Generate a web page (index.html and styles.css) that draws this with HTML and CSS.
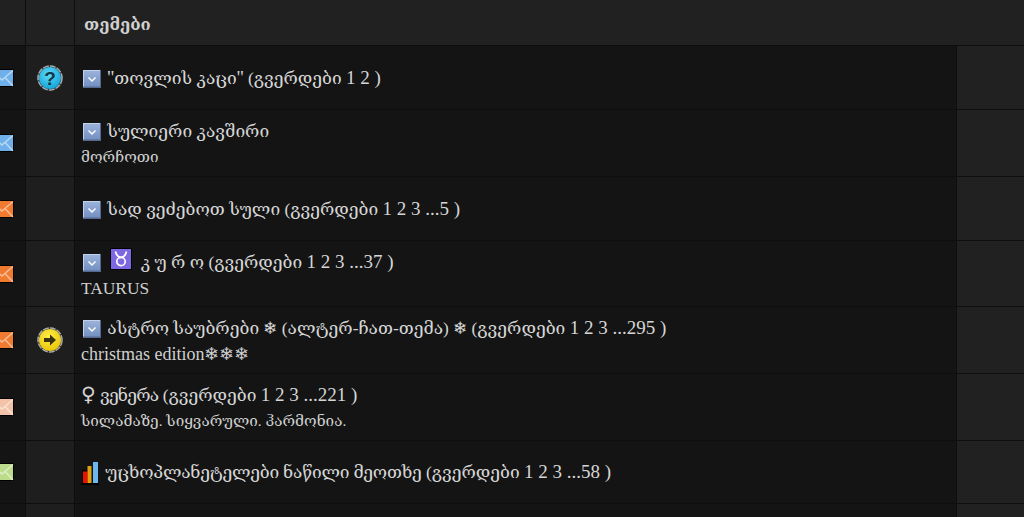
FILE: index.html
```html
<!DOCTYPE html>
<html lang="ka">
<head>
  <meta charset="UTF-8" />
  <title>თემები</title>
  <link rel="stylesheet" href="styles.css">
</head>
<body>
  <svg class="defs" width="0" height="0">
    <defs>
      <linearGradient id="fold-bg" x1="0" y1="0" x2="0" y2="1">
        <stop offset="0" stop-color="#9db4dc"/>
        <stop offset="1" stop-color="#6f8dc0"/>
      </linearGradient>
      <radialGradient id="blue-bg" cx="0.45" cy="0.35" r="0.7">
        <stop offset="0" stop-color="#5fdcfa"/>
        <stop offset="1" stop-color="#0f9fd6"/>
      </radialGradient>
      <radialGradient id="yellow-bg" cx="0.45" cy="0.35" r="0.7">
        <stop offset="0" stop-color="#fff04a"/>
        <stop offset="1" stop-color="#e8c206"/>
      </radialGradient>
    </defs>
    <symbol id="env" viewBox="0 0 24 18">
      <rect x="0.5" y="0.5" width="23" height="17" fill="currentColor" stroke="#000"/>
      <path d="M1 1.5 L12 11 L23 1.5 M1 17 L9 8.5 M23 17 L15 8.5" fill="none" stroke="#fff" stroke-opacity="0.5" stroke-width="1.5"/>
    </symbol>
    <symbol id="fold" viewBox="0 0 18 18">
      <rect width="18" height="18" fill="url(#fold-bg)"/>
      <path d="M0 0H18V1H1V18H0Z" fill="#c2d1ea"/>
      <path d="M0 16.5H18V18H0ZM17 0H18V18H17Z" fill="#56688e"/>
      <path d="M5.5 7.5 L9 11 L12.5 7.5" fill="none" stroke="#fff" stroke-width="1.5"/>
    </symbol>
  </svg>

  <div class="topics">
    <div class="row head">
      <div class="cell c-env"></div>
      <div class="cell c-state"></div>
      <div class="cell c-title"><b>თემები</b></div>
    </div>

    <div class="row r1">
      <div class="cell c-env"><svg class="env blue"><use href="#env"/></svg></div>
      <div class="cell c-state">
        <svg class="state" viewBox="0 0 26 26"><circle cx="13" cy="13" r="12" fill="none" stroke="#a5a9a9" stroke-width="1.6" stroke-dasharray="6 1"/><circle cx="13" cy="13" r="11" fill="url(#blue-bg)"/><text x="13" y="19.5" text-anchor="middle" class="mark">?</text></svg>
      </div>
      <div class="cell c-title">
        <p class="t"><svg class="fold"><use href="#fold"/></svg> <span class="n">''</span>თოვლის კაცი<span class="n">''</span> (გვერდები <span class="n">1 2 )</span></p>
      </div>
      <div class="cell c-last"></div>
    </div>

    <div class="row r2">
      <div class="cell c-env"><svg class="env blue"><use href="#env"/></svg></div>
      <div class="cell c-state"></div>
      <div class="cell c-title">
        <p class="t"><svg class="fold"><use href="#fold"/></svg> სულიერი კავშირი</p>
        <p class="d">მორჩოთი</p>
      </div>
      <div class="cell c-last"></div>
    </div>

    <div class="row r3">
      <div class="cell c-env"><svg class="env orange"><use href="#env"/></svg></div>
      <div class="cell c-state"></div>
      <div class="cell c-title">
        <p class="t"><svg class="fold"><use href="#fold"/></svg> სად ვეძებოთ სული (გვერდები <span class="n">1 2 3 ...5 )</span></p>
      </div>
      <div class="cell c-last"></div>
    </div>

    <div class="row r4">
      <div class="cell c-env"><svg class="env orange"><use href="#env"/></svg></div>
      <div class="cell c-state"></div>
      <div class="cell c-title">
        <p class="t"><svg class="fold"><use href="#fold"/></svg> <svg class="zodiac" viewBox="0 0 22 22"><rect x="0.5" y="0.5" width="21" height="21" fill="#7d68e2" stroke="#000"/><circle cx="11" cy="13.5" r="4.2" fill="none" stroke="#fff" stroke-width="1.7"/><path d="M5.5 3.5 C6.5 8 9 9.3 11 9.3 C13 9.3 15.5 8 16.5 3.5" fill="none" stroke="#fff" stroke-width="1.7"/></svg> კ უ რ ო (გვერდები <span class="n">1 2 3 ...37 )</span></p>
        <p class="d latin">TAURUS</p>
      </div>
      <div class="cell c-last"></div>
    </div>

    <div class="row r5">
      <div class="cell c-env"><svg class="env orange"><use href="#env"/></svg></div>
      <div class="cell c-state">
        <svg class="state" viewBox="0 0 26 26"><circle cx="13" cy="13" r="12" fill="none" stroke="#a5a9a9" stroke-width="1.6" stroke-dasharray="6 1"/><circle cx="13" cy="13" r="11" fill="url(#yellow-bg)"/><path d="M7 11H13V7.5L19 13L13 18.5V15H7Z" fill="#3a3210"/></svg>
      </div>
      <div class="cell c-title">
        <p class="t"><svg class="fold"><use href="#fold"/></svg> ასტრო საუბრები ❄ (ალტერ-ჩათ-თემა) ❄ (გვერდები <span class="n">1 2 3 ...295 )</span></p>
        <p class="d xmas">christmas edition❄❄❄</p>
      </div>
      <div class="cell c-last"></div>
    </div>

    <div class="row r6">
      <div class="cell c-env"><svg class="env peach"><use href="#env"/></svg></div>
      <div class="cell c-state"></div>
      <div class="cell c-title">
        <p class="t flush"><span class="venus">♀</span> <span class="tight">ვენერა</span> (გვერდები <span class="n">1 2 3 ...221 )</span></p>
        <p class="d">სილამაზე. სიყვარული. ჰარმონია.</p>
      </div>
      <div class="cell c-last"></div>
    </div>

    <div class="row r7">
      <div class="cell c-env"><svg class="env green"><use href="#env"/></svg></div>
      <div class="cell c-state"></div>
      <div class="cell c-title">
        <p class="t flush">
          <svg class="chart" viewBox="0 0 18 24"><path d="M1 23V9H6.5V23Z" fill="#000"/><path d="M2 22V10.5H6.5V22Z" fill="#f01000"/><path d="M6.5 22V5H10.5V22Z" fill="#e0a010"/><path d="M12 22V1H17V22Z" fill="#6cb8f0"/><path d="M0 22H18V24H0Z" fill="#000"/></svg>
          <span class="snug">უცხოპლანეტელები ნაწილი მეოთხე</span> (გვერდები <span class="n">1 2 3 ...58 )</span>
        </p>
      </div>
      <div class="cell c-last"></div>
    </div>

    <div class="row r8">
      <div class="cell c-env"></div>
      <div class="cell c-state"></div>
      <div class="cell c-title"></div>
      <div class="cell c-last"></div>
    </div>
  </div>
</body>
</html>
```

FILE: styles.css
```css
* {
  box-sizing: border-box;
}
html, body {
  height: 517px;
  overflow: hidden;
}
body {
  margin: 0;
  background: #141414;
  color: #d6d6d6;
  font-family: 'Liberation Serif', 'DejaVu Serif', serif;
}
.defs {
  display: block;
  height: 0;
}
.topics {
  display: flex;
  flex-direction: column;
}
.row {
  display: flex;
  border-bottom: 1px solid #0e0e0e;
}
.head { height: 46px; }
.r1 { height: 64px; }
.r2 { height: 67px; }
.r3 { height: 64px; }
.r4 { height: 66px; }
.r5 { height: 67px; }
.r6 { height: 67px; }
.r7 { height: 63px; }
.r8 { height: 14px; }

.cell {
  display: flex;
  align-items: center;
  border-right: 1px solid #0e0e0e;
}
.c-env {
  width: 26px;
  background: #141414;
  justify-content: flex-end;
  padding-right: 11px;
  overflow: hidden;
}
.c-state {
  width: 49px;
  background: #1e1e1e;
  justify-content: center;
}
.c-title {
  width: 882px;
  background: #141414;
  flex-direction: column;
  align-items: flex-start;
  justify-content: center;
  padding-left: 6px;
}
.c-last {
  flex: 1;
  background: #212121;
  border-right: 0;
}
.head .cell {
  background: #212121;
}
.head .c-title {
  flex: 1;
  border-right: 0;
  padding: 3px 0 0 9px;
  font-size: 16.6px;
  color: #d0d0d0;
}
.t {
  margin: 0;
  padding-left: 2px;
  font-size: 17.4px;
  line-height: 26px;
  white-space: nowrap;
}
.flush {
  padding-left: 0;
}
.n {
  font-size: 19px;
}
.tight {
  letter-spacing: -0.8px;
}
.snug {
  letter-spacing: -0.25px;
}
.d {
  margin: 1px 0 0;
  font-size: 15.3px;
  line-height: 24px;
  color: #cfcfcf;
  white-space: nowrap;
}
.latin {
  font-size: 17.4px;
}
.xmas {
  font-size: 18px;
}
.env {
  width: 24px;
  height: 18px;
  flex-shrink: 0;
}
.blue { color: #6fb0ea; }
.orange { color: #f07a30; }
.peach { color: #f3c3a8; }
.green { color: #bcdc8c; }
.state {
  width: 26px;
  height: 26px;
}
.mark {
  font: bold 19px 'Liberation Sans', sans-serif;
  fill: #123a4a;
}
.fold {
  width: 18px;
  height: 18px;
  margin-right: 2px;
  vertical-align: -4px;
}
.zodiac {
  width: 22px;
  height: 22px;
  margin: 0 4px 0 3px;
  vertical-align: -2px;
}
.venus {
  font: 20px 'DejaVu Sans', sans-serif;
}
.chart {
  width: 18px;
  height: 24px;
  margin-right: 2px;
  vertical-align: -7px;
}
```
